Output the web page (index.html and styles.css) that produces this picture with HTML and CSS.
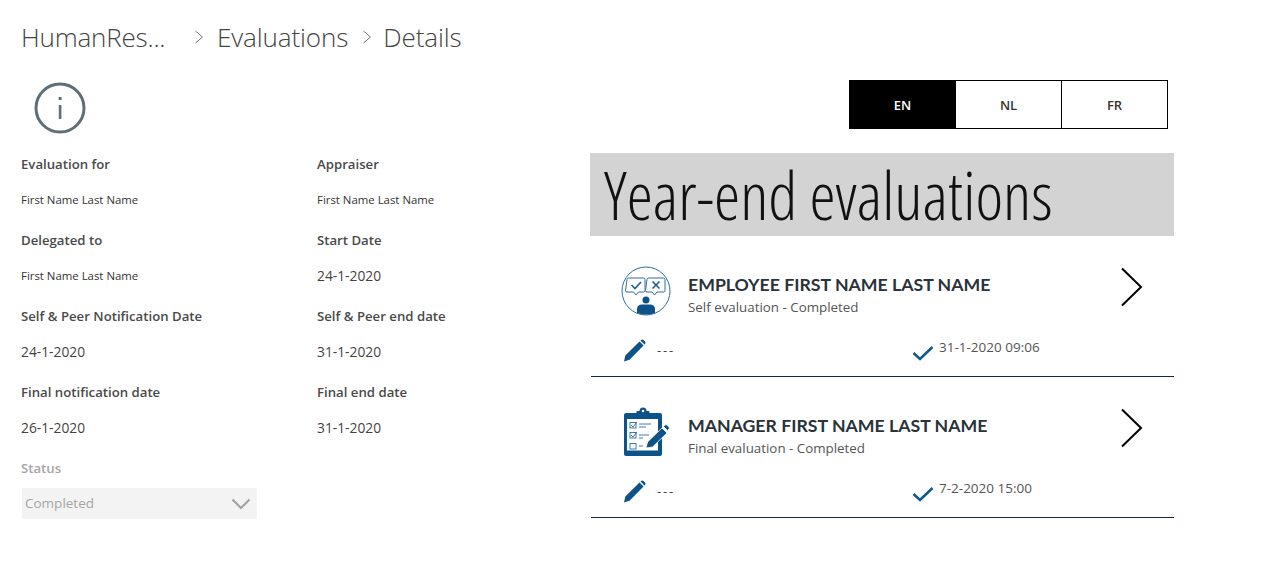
FILE: index.html

```html
<!DOCTYPE html>
<html lang="en">
<head>
    <meta charset="UTF-8">
    <meta name="viewport" content="width=device-width, initial-scale=1.0">
    <title>Evaluation Details</title>
    <link rel="stylesheet" href="styles.css">
</head>
<body>

<nav class="breadcrumb">
    <span class="crumb crumb-first">HumanRes...</span>
    <svg class="crumb-sep" viewBox="0 0 10 16"><path d="M1.5 2 L8.5 8 L1.5 14"/></svg>
    <span class="crumb">Evaluations</span>
    <svg class="crumb-sep crumb-sep-last" viewBox="0 0 10 16"><path d="M1.5 2 L8.5 8 L1.5 14"/></svg>
    <span class="crumb">Details</span>
</nav>

<div class="page">
    <section class="details">
        <svg class="info-icon" viewBox="0 0 52 52">
            <circle cx="26" cy="26" r="24" />
            <rect class="info-mark" x="24.8" y="23" width="2.6" height="14" />
            <rect class="info-mark" x="24.6" y="15" width="3" height="3" />
        </svg>

        <div class="fields">
            <div class="field">
                <div class="field-label">Evaluation for</div>
                <div class="field-value small">First Name Last Name</div>
            </div>
            <div class="field">
                <div class="field-label">Appraiser</div>
                <div class="field-value small">First Name Last Name</div>
            </div>
            <div class="field">
                <div class="field-label">Delegated to</div>
                <div class="field-value small">First Name Last Name</div>
            </div>
            <div class="field">
                <div class="field-label">Start Date</div>
                <div class="field-value">24-1-2020</div>
            </div>
            <div class="field">
                <div class="field-label">Self &amp; Peer Notification Date</div>
                <div class="field-value">24-1-2020</div>
            </div>
            <div class="field">
                <div class="field-label">Self &amp; Peer end date</div>
                <div class="field-value">31-1-2020</div>
            </div>
            <div class="field">
                <div class="field-label">Final notification date</div>
                <div class="field-value">26-1-2020</div>
            </div>
            <div class="field">
                <div class="field-label">Final end date</div>
                <div class="field-value">31-1-2020</div>
            </div>
            <div class="field">
                <div class="field-label disabled">Status</div>
                <div class="select">
                    <span>Completed</span>
                    <svg class="select-arrow" viewBox="0 0 20 12"><path d="M1.5 1.5 L10 10 L18.5 1.5"/></svg>
                </div>
            </div>
        </div>
    </section>

    <section class="evaluations">
        <div class="lang-row">
            <div class="lang-group">
                <div class="lang active">EN</div>
                <div class="lang">NL</div>
                <div class="lang">FR</div>
            </div>
        </div>

        <h1 class="band">Year-end evaluations</h1>

        <div class="card">
            <div class="card-top">
                <svg class="card-icon" viewBox="0 0 50 50">
                    <circle class="thin" cx="25" cy="25" r="24"/>
                    <path class="thin" d="M6 13.5 a1.5 1.5 0 0 1 1.5 -1.5 h15 a1.5 1.5 0 0 1 1.5 1.5 v11 a1.5 1.5 0 0 1 -1.5 1.5 h-5 l-2.5 3 l-2.5 -3 h-6.500 a1.5 1.5 0 0 1 -1.5 -1.500 z"/>
                    <path class="thin" d="M26 13.500 a1.5 1.5 0 0 1 1.5 -1.500 h15 a1.5 1.5 0 0 1 1.5 1.500 v11 a1.5 1.5 0 0 1 -1.5 1.500 h-6.500 l-2.500 3 l-2.500 -3 h-5 a1.5 1.5 0 0 1 -1.5 -1.500 z"/>
                    <path class="mark" d="M10.5 19 l3.500 3.500 l6 -6.500"/>
                    <path class="mark" d="M31.500 15.500 l7 7 M38.500 15.500 l-7 7"/>
                    <circle class="solid" cx="25" cy="34" r="3.500"/>
                    <path class="solid" d="M16 47 v-4 c0 -3 2 -4.500 5 -4.500 h8 c3 0 5 1.500 5 4.500 v4 q-9 3 -18 0 z"/>
                </svg>
                <div class="card-text">
                    <div class="card-title">EMPLOYEE FIRST NAME LAST NAME</div>
                    <div class="card-sub">Self evaluation - Completed</div>
                </div>
                <svg class="card-chevron" viewBox="0 0 24 40"><path d="M2 1.5 L21 20 L2 38.5"/></svg>
            </div>
            <div class="card-bottom">
                <div class="card-note">
                    <svg class="pencil" viewBox="0 0 24 24"><path d="M1 23.500 L2.300 17.500 L16.500 3.500 L20.500 7.500 L6.500 21.700 Z M18 2 Q19.200 0.800 20.500 2 L22 3.500 Q23.200 4.800 22 6 L21.500 6.500 L17.500 2.500 Z"/></svg>
                    <span class="dashes">---</span>
                </div>
                <div class="card-date">
                    <svg class="check" viewBox="0 0 22 16"><path d="M1.500 8 L8 14 L20.500 2"/></svg>
                    <span>31-1-2020 09:06</span>
                </div>
            </div>
        </div>

        <div class="card">
            <div class="card-top">
                <svg class="card-icon" viewBox="0 0 50 50">
                    <rect class="solid" x="3" y="6" width="38" height="43" rx="2"/>
                    <rect x="6" y="12" width="31" height="31.500" fill="#fff"/>
                    <rect class="solid" x="15.500" y="4" width="13" height="7.500" rx="1"/>
                    <circle class="solid" cx="22" cy="4" r="3.500"/>
                    <circle cx="22" cy="4" r="1.300" fill="#fff"/>
                    <g class="form-lines">
                        <rect x="9" y="15.500" width="6" height="5.500"/>
                        <rect x="9" y="25.500" width="6" height="5.500"/>
                        <rect x="9" y="36.500" width="6" height="5.500"/>
                        <path d="M10 18 l2 2 l4 -5 M10 28 l2 2 l4 -5"/>
                        <path d="M18 17 h12 M18 20 h7 M18 28 h10 M18 31 h4 M18 39 h4"/>
                    </g>
                    <path class="solid pen" d="M25 41 l1.500 -6 L41 21 l5 5 L31.500 40 z M42.500 19.500 l1.500 -1.500 q1 -0.800 2 0 l2 2 q0.800 1 0 2 l-1.500 1.500 z"/>
                </svg>
                <div class="card-text">
                    <div class="card-title">MANAGER FIRST NAME LAST NAME</div>
                    <div class="card-sub">Final evaluation - Completed</div>
                </div>
                <svg class="card-chevron" viewBox="0 0 24 40"><path d="M2 1.5 L21 20 L2 38.5"/></svg>
            </div>
            <div class="card-bottom">
                <div class="card-note">
                    <svg class="pencil" viewBox="0 0 24 24"><path d="M1 23.500 L2.300 17.500 L16.500 3.500 L20.500 7.500 L6.500 21.700 Z M18 2 Q19.200 0.800 20.500 2 L22 3.500 Q23.200 4.800 22 6 L21.500 6.500 L17.500 2.500 Z"/></svg>
                    <span class="dashes">---</span>
                </div>
                <div class="card-date">
                    <svg class="check" viewBox="0 0 22 16"><path d="M1.500 8 L8 14 L20.500 2"/></svg>
                    <span>7-2-2020 15:00</span>
                </div>
            </div>
        </div>
    </section>
</div>

</body>
</html>
```

FILE: styles.css

```css
body {
    margin: 0;
    background-color: #ffffff;
    font-family: 'Open Sans', 'Noto Sans', sans-serif;
    color: #333333;
    overflow: hidden;
}
.breadcrumb {
    display: flex;
    align-items: center;
    height: 46px;
    padding: 14px 0 0 21px;
}
.crumb {
    font-size: 26px;
    font-weight: 300;
    color: #444444;
    line-height: 44px;
    letter-spacing: -0.1px;
}
.crumb-first {
    width: 173px;
    letter-spacing: -0.2px;
}
.crumb-sep {
    width: 10px;
    height: 16px;
    margin-right: 13px;
    fill: none;
    stroke: #777777;
    stroke-width: 1;
}
.crumb-sep-last {
    margin: 0 11px 0 14px;
}
.page {
    display: flex;
}
.details {
    width: 569px;
    padding-left: 21px;
}
.info-icon {
    display: block;
    width: 52px;
    height: 52px;
    margin: 22px 0 0 13px;
    fill: none;
    stroke: #5f6f76;
    stroke-width: 3;
}
.info-mark {
    fill: #5f6f76;
    stroke: none;
}
.fields {
    display: grid;
    grid-template-columns: 296px 240px;
    grid-auto-rows: 76px;
    margin-top: 21px;
}
.field-label {
    font-size: 13.2px;
    font-weight: 600;
    line-height: 18px;
    color: #4a4a4a;
    margin-bottom: 18px;
}
.field-label.disabled {
    color: #a6a6a6;
    margin-bottom: 11px;
}
.field-value {
    font-size: 13.800px;
    line-height: 18px;
    color: #444444;
}
.field-value.small {
    font-size: 11.400px;
    color: #333333;
}
.select {
    display: flex;
    align-items: center;
    justify-content: space-between;
    box-sizing: border-box;
    width: 235px;
    height: 31px;
    margin-left: 1px;
    padding: 0 6px 2px 3px;
    background-color: #f3f3f3;
    font-size: 13.500px;
    color: #a6a6a6;
}
.select-arrow {
    width: 20px;
    height: 12px;
    margin-top: 2px;
    fill: none;
    stroke: #a0a0a0;
    stroke-width: 2;
}
.evaluations {
    width: 584px;
}
.lang-row {
    height: 73px;
    margin-top: 20px;
}
.lang-group {
    display: flex;
    box-sizing: border-box;
    width: 319px;
    height: 49px;
    margin-left: 259px;
    border: 1px solid #000000;
    background-color: #ffffff;
}
.lang {
    flex: 1;
    display: flex;
    align-items: center;
    justify-content: center;
    font-size: 13px;
    font-weight: 600;
    color: #333333;
    border-left: 1px solid #000000;
}
.lang.active {
    background-color: #000000;
    color: #ffffff;
    border-left: none;
}
.band {
    height: 83px;
    margin: 0;
    padding-left: 14px;
    background-color: #d3d3d3;
    font-size: 66px;
    font-weight: 300;
    font-stretch: condensed;
    line-height: 83px;
    color: #111111;
    white-space: nowrap;
}
.card {
    box-sizing: border-box;
    height: 141px;
    margin-left: 1px;
    border-bottom: 1px solid #0f2a3a;
}
.card-top {
    display: flex;
    align-items: flex-start;
    padding: 30px 30px 0 30px;
}
.card-icon {
    flex: none;
    width: 50px;
    height: 50px;
    fill: none;
}
.thin {
    fill: #ffffff;
    stroke: #2e6f9b;
    stroke-width: 1;
}
.mark {
    fill: none;
    stroke: #1f5f8b;
    stroke-width: 1.600;
}
.solid {
    fill: #0b5389;
}
.pen {
    stroke: #ffffff;
    stroke-width: 0.800;
}
.form-lines rect,
.form-lines path {
    fill: none;
    stroke: #2c6d9c;
    stroke-width: 0.900;
}
.card-text {
    flex: 1;
    margin-left: 17px;
    padding-top: 7px;
}
.card-title {
    font-family: 'Lato', sans-serif;
    font-size: 17.700px;
    font-weight: 700;
    line-height: 24px;
    color: #2a323a;
}
.card-sub {
    font-size: 13.350px;
    line-height: 20px;
    color: #555555;
}
.card-chevron {
    flex: none;
    width: 24px;
    height: 40px;
    margin-top: 1px;
    fill: none;
    stroke: #000000;
    stroke-width: 2;
}
.card-bottom {
    display: flex;
    padding: 21px 0 0 32px;
}
.card-note {
    display: flex;
    align-items: center;
    width: 289px;
    font-size: 13px;
    color: #444444;
}
.pencil {
    width: 24px;
    height: 24px;
    margin-right: 10px;
    fill: #0b5389;
}
.dashes {
    letter-spacing: 1.800px;
}
.card-date {
    display: flex;
    align-items: flex-start;
    font-size: 13.500px;
    line-height: 18px;
    color: #555555;
}
.check {
    width: 22px;
    height: 16px;
    margin: 7px 5px 0 0;
    fill: none;
    stroke: #0f5a8a;
    stroke-width: 2.500;
}
```
